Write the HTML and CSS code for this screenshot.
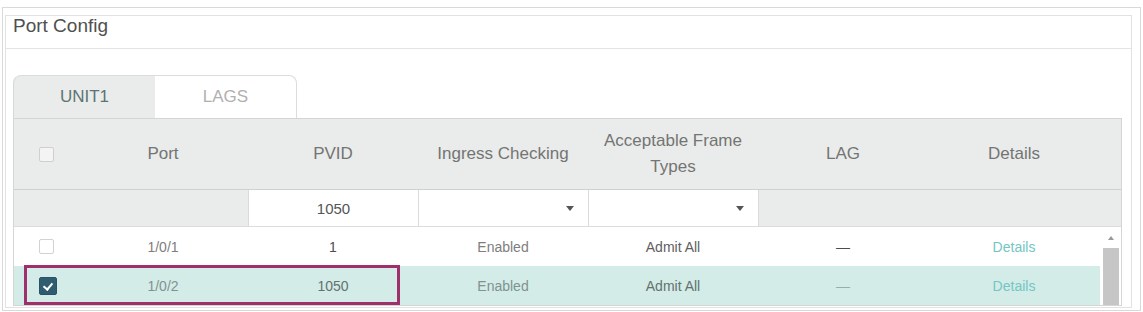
FILE: index.html
```html
<!DOCTYPE html>
<html>
<head>
	<title>Port Config</title>
	<link rel="stylesheet" href="styles.css">
</head>
<body>
	<div class="frame">
		<div class="panel">
			<div class="panel-title">Port Config</div>
			<div class="panel-body">
				<div class="tabs">
					<div class="tab active">UNIT1</div>
					<div class="tab">LAGS</div>
				</div>
				<div class="grid">
					<div class="row head">
						<div class="cell"><span class="check"></span></div>
						<div class="cell">Port</div>
						<div class="cell">PVID</div>
						<div class="cell">Ingress Checking</div>
						<div class="cell">Acceptable Frame<br>Types</div>
						<div class="cell">LAG</div>
						<div class="cell">Details</div>
						<div class="cell"></div>
					</div>
					<div class="row filter">
						<div class="cell"></div>
						<div class="cell"></div>
						<div class="cell input">1050</div>
						<div class="cell input select"><span class="caret"></span></div>
						<div class="cell input select"><span class="caret"></span></div>
						<div class="cell"></div>
						<div class="cell"></div>
						<div class="cell"></div>
					</div>
					<div class="tbody">
						<div class="rows">
							<div class="row item">
								<div class="cell"><span class="check"></span></div>
								<div class="cell port">1/0/1</div>
								<div class="cell pvid">1</div>
								<div class="cell">Enabled</div>
								<div class="cell frame-type">Admit All</div>
								<div class="cell lag">—</div>
								<div class="cell"><a class="link">Details</a></div>
							</div>
							<div class="row item selected">
								<div class="cell"><span class="check checked"></span></div>
								<div class="cell port">1/0/2</div>
								<div class="cell pvid">1050</div>
								<div class="cell">Enabled</div>
								<div class="cell frame-type">Admit All</div>
								<div class="cell lag">—</div>
								<div class="cell"><a class="link">Details</a></div>
								<div class="mark"></div>
							</div>
						</div>
						<div class="scrollbar">
							<span class="arrow"></span>
							<span class="thumb"></span>
						</div>
					</div>
				</div>
			</div>
		</div>
	</div>
</body>
</html>
```

FILE: styles.css
```css
body {
	margin: 0;
	padding: 7px 2px 0 2px;
	font-family: "Liberation Sans", Arial, sans-serif;
	background: #fff;
	overflow: hidden;
}
.frame {
	border: 1px solid #d9d9d9;
	padding: 7px 8px 2px 2px;
}
.panel {
	border: 1px solid #e2e2e2;
}
.panel-title {
	height: 33px; box-sizing: border-box;
	padding: 0 7px;
	font-size: 19px; line-height: 20px;
	color: #505050;
	border-bottom: 1px solid #e4e4e4;
}
.panel-body {
	padding: 26px 9px 1px 7px;
}

/* tabs */
.tabs {
	display: flex;
}
.tab {
	width: 142px; height: 43px;
	box-sizing: border-box;
	display: flex; align-items: center; justify-content: center;
	font-size: 17px; color: #b0b0b0;
	background: #fff;
	border: 1px solid #dcdcdc; border-bottom: none; border-left: none;
	border-radius: 0 8px 0 0;
}
.tab.active {
	color: #5b7474;
	background: #e9ecea;
	border-left: 1px solid #d6d8d6; border-right: none;
	border-radius: 8px 0 0 0;
}

/* table */
.grid {
	border: 1px solid #d4d6d4;
}
.row {
	display: grid;
	grid-template-columns: 64px 170px 170px 170px 170px 170px 172px 21px;
}
.cell {
	display: flex; align-items: center; justify-content: center;
	text-align: center;
}
.head {
	height: 70px;
	background: #e9ecea;
	border-bottom: 1px solid #cfd1cf;
	font-size: 17px; line-height: 26px;
	color: #747474;
}
.filter {
	height: 36px;
	background: #e9ecea;
	border-bottom: 1px solid #dcdcdc;
}
.filter .input {
	background: #fff;
	border-left: 1px solid #dadada;
	font-size: 15px; color: #555;
}
.filter .select {
	justify-content: flex-end;
	padding-right: 14px;
}
.filter .select + .cell {
	border-left: 1px solid #dadada;
}
.caret {
	width: 0; height: 0;
	border-left: 4px solid transparent;
	border-right: 4px solid transparent;
	border-top: 5px solid #555;
}
.check {
	width: 15px; height: 15px;
	box-sizing: border-box;
	border: 1px solid #cfcfcf; border-radius: 2px;
	background: #f4f4f4;
}
.item .check {
	background: #fff;
	border-color: #d2d2d2;
}
.item .check.checked {
	width: 18px; height: 18px;
	margin-left: 3px;
	background: #2f5d70; border-color: #2a5466;
	position: relative;
}
.check.checked:after {
	content: '';
	position: absolute;
	left: 5px; top: 3px;
	width: 4px; height: 7px;
	border: solid #fff; border-width: 0 2px 2px 0;
	transform: rotate(40deg);
}

.tbody {
	display: flex;
	height: 78px;
}
.rows {
	flex: 1;
}
.item {
	grid-template-columns: 64px 170px 170px 170px 170px 170px 172px;
	height: 39px;
	font-size: 14px; color: #7e7e7e;
}
.item .pvid, .item .lag {
	color: #4d4d4d;
}
.item .frame-type {
	color: #5e5e5e;
}
.link {
	color: #73c6c3;
}
.selected {
	background: #d3ece8;
	color: #7f9290;
	position: relative;
}
.selected .pvid, .selected .frame-type {
	color: #63716f;
}
.selected .lag {
	color: #98aeac;
}
.mark {
	position: absolute;
	left: 10px; top: -1px;
	width: 376px; height: 40px;
	box-sizing: border-box;
	border: 3px solid #a0306b;
}

.scrollbar {
	width: 21px;
	box-sizing: border-box;
	padding: 0 2px 0 3px;
	display: flex; flex-direction: column; align-items: center;
}
.arrow {
	margin-top: 9px;
	width: 0; height: 0;
	border-left: 3px solid transparent;
	border-right: 3px solid transparent;
	border-bottom: 4px solid #999;
}
.thumb {
	margin-top: 8px;
	width: 16px; flex: 1;
	background: #c6c6c6;
}
```
